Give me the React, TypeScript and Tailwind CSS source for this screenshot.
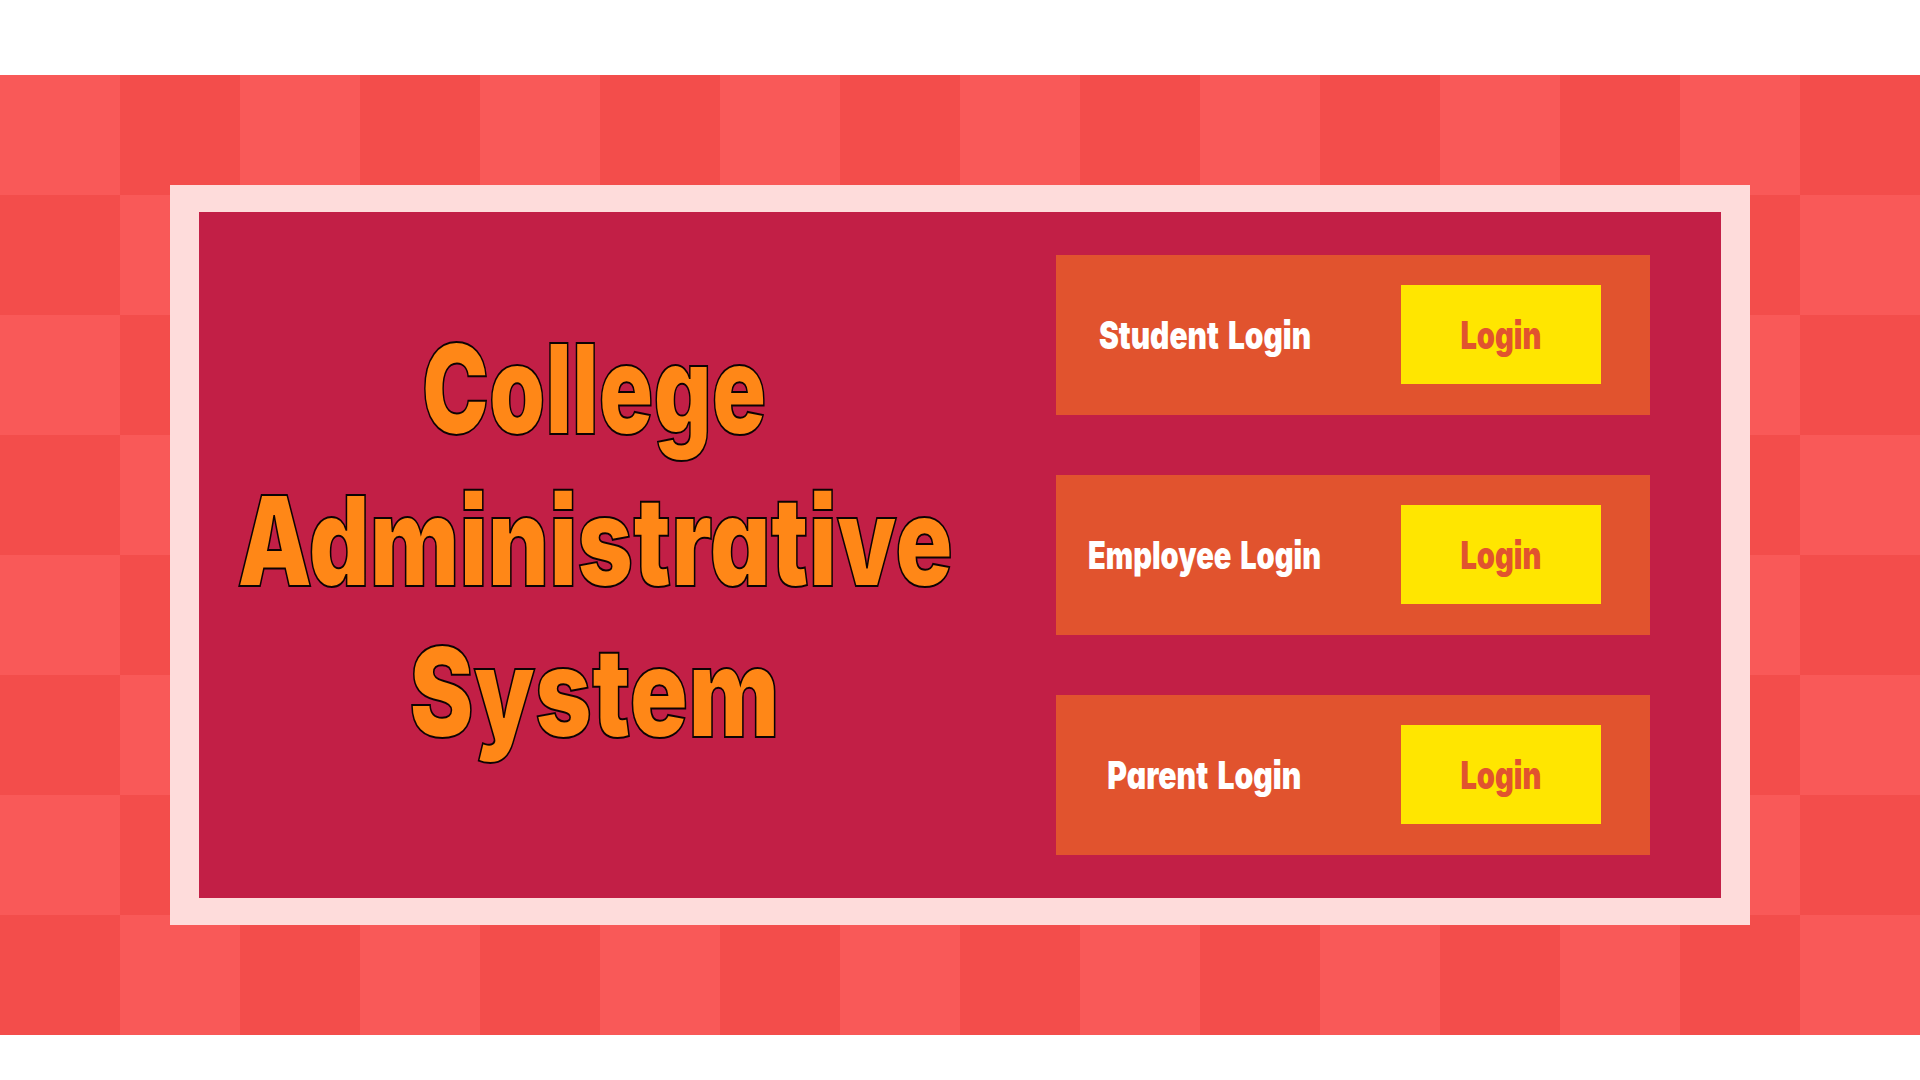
const titleLines = [
  { text: 'College', scale: 'scale-x-[0.721]' },
  { text: 'Administrative', scale: 'scale-x-[0.76]' },
  { text: 'System', scale: 'scale-x-[0.773]' },
];

const logins = [
  { label: 'Student Login', scale: 'scale-x-[0.786]' },
  { label: 'Employee Login', scale: 'scale-x-[0.764]' },
  { label: 'Parent Login', scale: 'scale-x-[0.793]' },
];

function LoginCard({ label, scale }: { label: string; scale: string }) {
  return (
    <div className="grid h-40 w-[594px] grid-cols-[297px_297px] justify-items-center bg-[#e1532e] pt-[30px] text-[38px] leading-[101px] font-black">
      <span className={`whitespace-nowrap text-white [word-spacing:4px] ${scale}`}>{label}</span>
      <button className="mr-px flex h-[99px] w-[200px] items-start justify-center bg-[#ffe600] text-[#e1532e]">
        <span className="scale-x-[0.765]">Login</span>
      </button>
    </div>
  );
}

export default function App() {
  return (
    <div className="h-[1080px] w-[1920px] overflow-hidden bg-white py-[75px] font-['Inter',sans-serif] [font-feature-settings:'cv11','ss07'] [font-optical-sizing:none]">
      <div className="flex h-[960px] items-center justify-center bg-[conic-gradient(#f34d4b_25%,#f95958_0_50%,#f34d4b_0_75%,#f95958_0)] bg-size-[240px_240px]">
        <main className="flex h-[740px] w-[1580px] border-x-[29px] border-y-[27px] border-[#fedcdb] bg-[#c21f46]">
          <h1 className="flex w-[791px] flex-col items-center justify-center pb-[29px] text-[125px] leading-[151.5px] font-black text-[#ff8717] [-webkit-text-stroke:2px_#0c0303]">
            {titleLines.map((line) => (
              <span key={line.text} className={`whitespace-nowrap ${line.scale}`}>
                {line.text}
              </span>
            ))}
          </h1>
          <section className="flex flex-col justify-center gap-[60px] pl-[66px]">
            {logins.map((login) => (
              <LoginCard key={login.label} {...login} />
            ))}
          </section>
        </main>
      </div>
    </div>
  );
}
